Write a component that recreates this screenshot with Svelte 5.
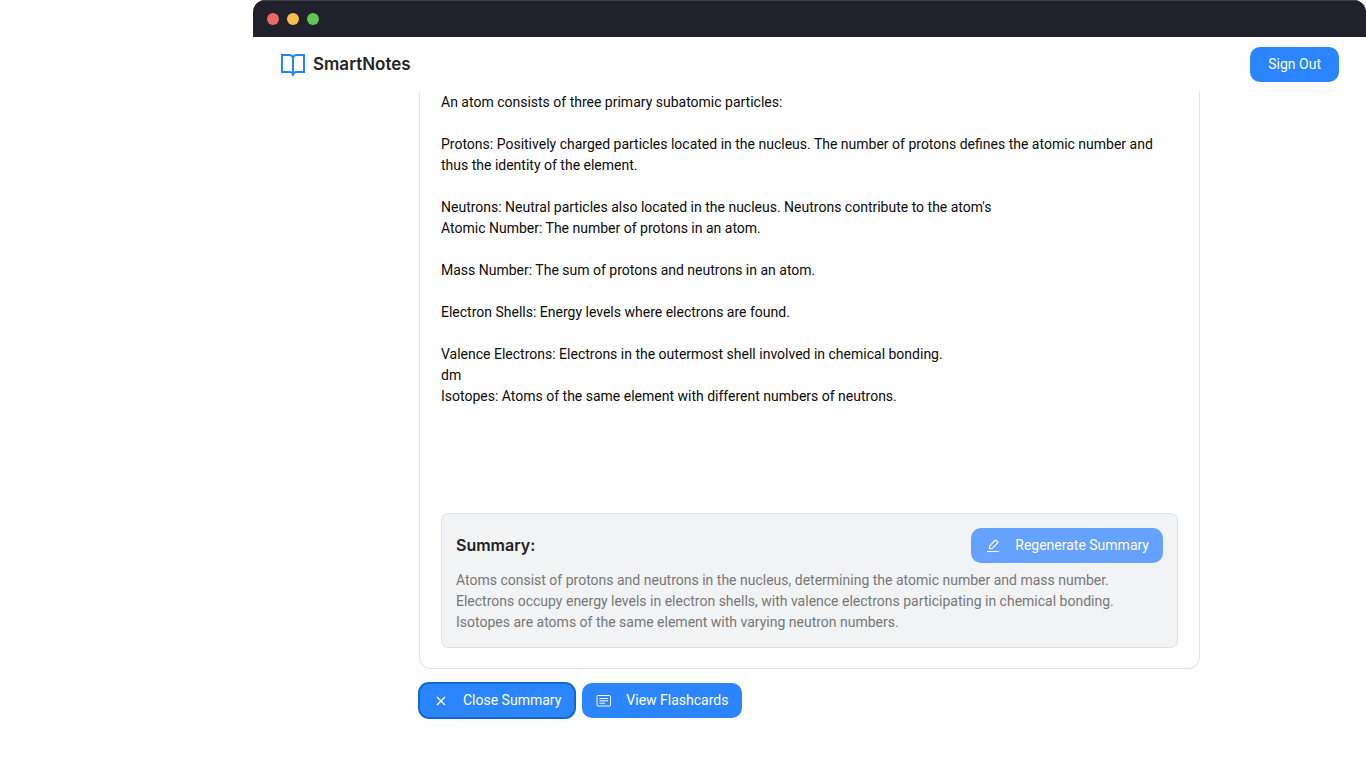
<script>
  const paragraphs = [
    ['An atom consists of three primary subatomic particles:'],
    ['Protons: Positively charged particles located in the nucleus. The number of protons defines the atomic number and thus the identity of the element.'],
    ["Neutrons: Neutral particles also located in the nucleus. Neutrons contribute to the atom's", 'Atomic Number: The number of protons in an atom.'],
    ['Mass Number: The sum of protons and neutrons in an atom.'],
    ['Electron Shells: Energy levels where electrons are found.'],
    ['Valence Electrons: Electrons in the outermost shell involved in chemical bonding.', 'dm', 'Isotopes: Atoms of the same element with different numbers of neutrons.']
  ];
</script>

<div class="window">
  <div class="titlebar">
    <span class="dot red"></span>
    <span class="dot yellow"></span>
    <span class="dot green"></span>
  </div>

  <header>
    <div class="brand">
      <svg width="26" height="24" viewBox="0 0 26 24" fill="none" stroke="#2684ff" stroke-width="2" stroke-linejoin="miter" aria-hidden="true">
        <path d="M13 5Q12.500 2 9 2H2V19H9.500Q13 19 13 22.500" />
        <path d="M13 5Q13.500 2 17 2H24V19H16.500Q13 19 13 22.500" />
        <path d="M13 4.500V22.500" />
      </svg>
      <span>SmartNotes</span>
    </div>
    <button type="button" class="btn signout">Sign Out</button>
  </header>

  <main>
    <article class="card">
      <div class="note">
        {#each paragraphs as lines}
          <p>{#each lines as line, i}{#if i}<br />{/if}{line}{/each}</p>
        {/each}
      </div>

      <section class="summary">
        <div class="summary-head">
          <h2>Summary:</h2>
          <button type="button" class="btn icon-btn muted">
            <svg width="16" height="16" viewBox="0 0 16 16" fill="none" stroke="currentColor" stroke-width="1.1" stroke-linejoin="round" aria-hidden="true">
              <path d="M2 13.500h12" />
              <path d="M4.300 10.700l.6-3.100L10.500 2l2.500 2.500L7.400 10.100z" />
            </svg>
            <span>Regenerate Summary</span>
          </button>
        </div>
        <p>Atoms consist of protons and neutrons in the nucleus, determining the atomic number and mass number. Electrons occupy energy levels in electron shells, with valence electrons participating in chemical bonding. Isotopes are atoms of the same element with varying neutron numbers.</p>
      </section>
    </article>

    <div class="actions">
      <button type="button" class="btn icon-btn active">
        <svg width="16" height="16" viewBox="0 0 16 16" fill="none" stroke="currentColor" stroke-width="1.4" aria-hidden="true">
          <path d="M4 4l8 8M12 4l-8 8" />
        </svg>
        <span>Close Summary</span>
      </button>
      <button type="button" class="btn icon-btn">
        <svg width="16" height="16" viewBox="0 0 16 16" fill="none" stroke="currentColor" stroke-width="1" aria-hidden="true">
          <rect x="1" y="2.500" width="13.500" height="10.500" rx="1" />
          <path d="M3.500 5.500h8.500M3.500 7.800h8.500M3.500 10.200h5.500" />
        </svg>
        <span>View Flashcards</span>
      </button>
    </div>
  </main>
</div>

<style>
  :global(body) {
    background: #fff;
    font-family: Roboto, 'Liberation Sans', sans-serif;
    font-size: 14px;
    line-height: 21px;
    color: #0c0c0c;
  }

  .window {
    margin-left: 253px;
    min-height: 100vh;
    box-sizing: border-box;
    background: #fefefe;
    border-radius: 12px 12px 0 0;
    overflow: hidden;
  }

  .titlebar {
    display: flex;
    align-items: center;
    gap: 8px;
    height: 36px;
    padding: 0 14px;
    background: #21212c;
    border-top: 1px solid #3d3f42;
  }

  .dot {
    width: 12px;
    height: 12px;
    border-radius: 50%;
  }

  .red { background: #ec6a5e; }
  .yellow { background: #f3bf4f; }
  .green { background: #61c554; }

  header {
    display: flex;
    align-items: center;
    justify-content: space-between;
    height: 55px;
    padding: 0 27px;
  }

  .brand {
    display: flex;
    align-items: center;
    gap: 7px;
    font-family: Inter, 'Liberation Sans', sans-serif;
    font-size: 17px;
    font-weight: 600;
    color: #252525;
  }

  .btn {
    display: inline-flex;
    align-items: center;
    justify-content: center;
    box-sizing: border-box;
    height: 35px;
    padding: 0 14px;
    border: 0;
    border-radius: 10px;
    background: #2b85ff;
    color: #fff;
    font: inherit;
    cursor: pointer;
  }

  .signout {
    padding: 0 18px;
  }

  .icon-btn {
    gap: 14px;
  }

  .muted {
    background: #65a1ff;
  }

  .active {
    box-shadow: 0 0 0 1px #1266cf, inset 0 0 0 1px #1266cf;
  }

  main {
    max-width: 781px;
    margin: 0 auto;
  }

  .card {
    padding: 0 21px 20px;
    border: 1px solid #e4e4e6;
    border-top: 0;
    border-radius: 0 0 12px 12px;
  }

  .note {
    min-height: 421px;
  }

  p {
    margin: 0;
  }

  .note p + p {
    margin-top: 21px;
  }

  .summary {
    padding: 14px;
    border: 1px solid #e3e3e5;
    border-radius: 7px;
    background: #f2f3f5;
    color: #777;
  }

  .summary-head {
    display: flex;
    align-items: center;
    justify-content: space-between;
    margin-bottom: 7px;
  }

  h2 {
    margin: 0;
    font-family: Inter, 'Liberation Sans', sans-serif;
    font-size: 16px;
    font-weight: 600;
    color: #222;
  }

  .actions {
    display: flex;
    flex-wrap: wrap;
    gap: 7px;
    padding-top: 14px;
  }
</style>
